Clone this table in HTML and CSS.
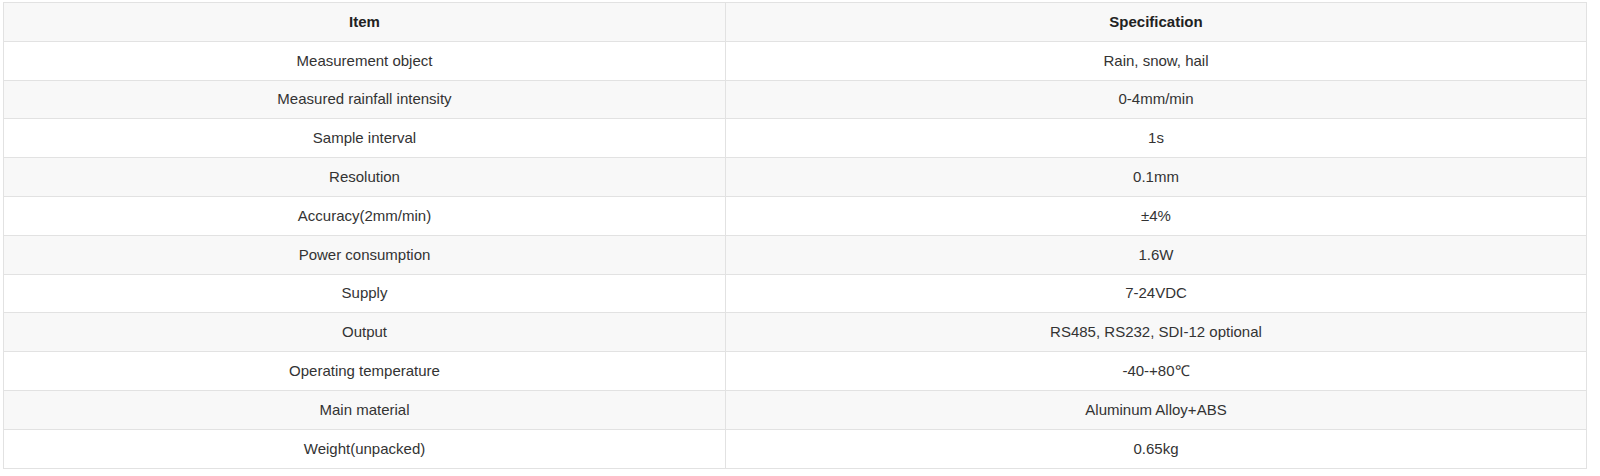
FILE: index.html
```html
<!DOCTYPE html>
<html>
<head>
<meta charset="utf-8">
<link rel="stylesheet" href="styles.css">
</head>
<body>
<div class="wrap">
<table class="spec">
<thead>
<tr><th class="col-item">Item</th><th>Specification</th></tr>
</thead>
<tbody>
<tr><td>Measurement object</td><td>Rain, snow, hail</td></tr>
<tr><td>Measured rainfall intensity</td><td>0-4mm/min</td></tr>
<tr><td>Sample interval</td><td>1s</td></tr>
<tr><td>Resolution</td><td>0.1mm</td></tr>
<tr><td>Accuracy(2mm/min)</td><td>±4%</td></tr>
<tr><td>Power consumption</td><td>1.6W</td></tr>
<tr><td>Supply</td><td>7-24VDC</td></tr>
<tr><td>Output</td><td>RS485, RS232, SDI-12 optional</td></tr>
<tr><td>Operating temperature</td><td>-40-+80℃</td></tr>
<tr><td>Main material</td><td>Aluminum Alloy+ABS</td></tr>
<tr><td>Weight(unpacked)</td><td>0.65kg</td></tr>
</tbody>
</table>
</div>
</body>
</html>
```
FILE: styles.css
```css
html, body {
  margin: 0;
  padding: 0;
  background: #ffffff;
}
.wrap {
  padding: 2px 13px 0 3px;
}
.spec {
  width: 1584px;
  border-collapse: collapse;
  font-family: "Liberation Sans", Arial, sans-serif;
  font-size: 15px;
  color: #333333;
  table-layout: fixed;
}
.spec th, .spec td {
  border: 1px solid #e2e2e2;
  text-align: center;
  vertical-align: middle;
  height: 38.8px;
  padding: 0 8px;
  box-sizing: border-box;
  line-height: 20px;
}
.spec th {
  font-weight: bold;
  color: #222222;
  background: #f8f8f8;
}
.col-item {
  width: 722px;
}
.spec tbody tr:nth-child(even) td {
  background: #f8f8f8;
}
.spec tbody tr:nth-child(odd) td {
  background: #ffffff;
}
```
